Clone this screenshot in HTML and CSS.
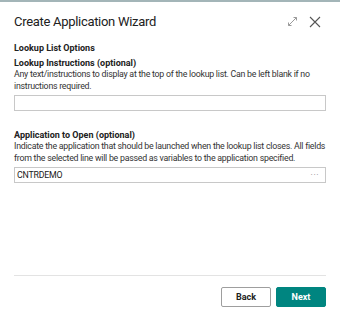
FILE: index.html
```html
<!DOCTYPE html>
<html lang="en">
<head>
  <meta charset="UTF-8" />
  <meta name="viewport" content="width=device-width, initial-scale=1.0" />
  <title>Create Application Wizard</title>
  <link rel="stylesheet" href="styles.css">
</head>
<body>
  <div class="dialog">
    <div class="header">
      <h1 class="title">Create Application Wizard</h1>
      <div class="actions">
        <svg class="icon" width="11" height="11" viewBox="0 0 11 11">
          <path d="M1.5 9.5 L9.5 1.5 M6.5 1.5 H9.5 V4.5 M1.5 6.5 V9.5 H4.5" fill="none" stroke="#9a9a9a" stroke-width="1"/>
        </svg>
        <svg class="icon" width="12" height="12" viewBox="0 0 12 12">
          <path d="M1 1 L11 11 M11 1 L1 11" fill="none" stroke="#555" stroke-width="1.1"/>
        </svg>
      </div>
    </div>

    <div class="content">
      <div class="group-title">Lookup List Options</div>

      <div class="field">
        <label class="field-label">Lookup Instructions (optional)</label>
        <p class="field-desc">Any text/instructions to display at the top of the lookup list. Can be left blank if no<br>instructions required.</p>
        <div class="input"></div>
      </div>

      <div class="field">
        <label class="field-label">Application to Open (optional)</label>
        <p class="field-desc">Indicate the application that should be launched when the lookup list closes. All fields<br>from the selected line will be passed as variables to the application specified.</p>
        <div class="input">
          <span>CNTRDEMO</span>
          <span class="dots">&middot;&middot;&middot;</span>
        </div>
      </div>
    </div>

    <div class="footer">
      <button class="btn">Back</button>
      <button class="btn primary">Next</button>
    </div>
  </div>
</body>
</html>
```

FILE: styles.css
```css
body {
  margin: 0;
  font-family: Roboto, "Noto Sans", sans-serif;
  color: #212121;
  background: #fff;
}
.dialog {
  width: 340px;
  height: 320px;
  border-top: 2px solid #a3b5b8;
  box-sizing: border-box;
  display: flex;
  flex-direction: column;
  padding: 0 14px;
}
.header {
  display: flex;
  align-items: center;
  justify-content: space-between;
  height: 39px;
}
.title {
  margin: 0;
  font-size: 13px;
  font-weight: 400;
  letter-spacing: -0.3px;
}
.actions {
  display: flex;
  align-items: center;
  gap: 11px;
  margin-right: 5px;
}
.icon {
  display: block;
}
.content {
  flex: 1;
  padding-top: 1px;
}
.group-title {
  font-size: 9px;
  font-weight: 700;
  line-height: 12px;
  margin-bottom: 4px;
}
.field {
  margin-bottom: 19px;
}
.field-label {
  display: block;
  font-size: 9px;
  font-weight: 700;
  line-height: 11px;
}
.field-desc {
  margin: 0 0 3px;
  font-size: 8.8px;
  line-height: 11.5px;
  letter-spacing: -0.25px;
  white-space: nowrap;
  color: #333;
}
.input {
  height: 16px;
  border: 1px solid #c8c8c8;
  box-sizing: border-box;
  display: flex;
  align-items: center;
  justify-content: space-between;
  padding: 0 6px 0 2px;
  font-size: 8.8px;
  letter-spacing: -0.2px;
}
.dots {
  color: #888;
  letter-spacing: 0.5px;
}
.footer {
  border-top: 1px solid #e3e3e3;
  display: flex;
  justify-content: flex-end;
  gap: 5px;
  padding: 11px 0 13px;
}
.btn {
  width: 50px;
  height: 20px;
  font-family: inherit;
  font-size: 9px;
  font-weight: 700;
  background: #fff;
  color: #212121;
  border: 1px solid #9e9e9e;
  border-radius: 2px;
  cursor: pointer;
}
.btn.primary {
  background: #008580;
  border-color: #008580;
  color: #fff;
}
```
